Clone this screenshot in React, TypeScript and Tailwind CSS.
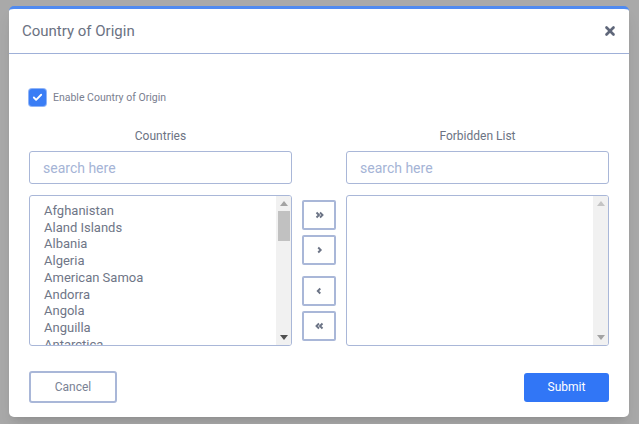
import { Check, X } from "lucide-react"

const countries = [
  "Afghanistan",
  "Aland Islands",
  "Albania",
  "Algeria",
  "American Samoa",
  "Andorra",
  "Angola",
  "Anguilla",
  "Antarctica",
]

// chevron paths for the move buttons: >>, >, <, <<
const moveButtons = [
  "M1.5 1.5 L4 4 L1.5 6.5 M5 1.5 L7.5 4 L5 6.5",
  "M3.2 1.5 L5.7 4 L3.2 6.5",
  "M5.3 1.5 L2.8 4 L5.3 6.5",
  "M4 1.5 L1.5 4 L4 6.5 M7.5 1.5 L5 4 L7.5 6.5",
]

function Scrollbar({ thumb }: { thumb: boolean }) {
  const arrow = thumb ? "#a3a3a3" : "#c4c4c4"
  return (
    <div className="flex w-[15px] flex-col items-center bg-[#f1f1f1]">
      <div className="flex h-[15px] items-center justify-center">
        <svg width="8" height="5" viewBox="0 0 8 5">
          <path d="M0 5 L4 0 L8 5 Z" fill={arrow} />
        </svg>
      </div>
      {thumb && <div className="h-[30px] w-[12px] bg-[#c1c1c1]" />}
      <div className="flex-1" />
      <div className="flex h-[15px] items-center justify-center">
        <svg width="8" height="5" viewBox="0 0 8 5">
          <path d="M0 0 L4 5 L8 0 Z" fill={thumb ? "#505050" : "#a3a3a3"} />
        </svg>
      </div>
    </div>
  )
}

function ListColumn({ title, items }: { title: string; items: string[] }) {
  return (
    <div className="flex w-[263px] flex-col">
      <p className="text-center text-[12px] leading-[14px] text-[#6c7383]">{title}</p>
      <input
        placeholder="search here"
        className="mt-[8px] h-[33px] w-full rounded-[3px] border border-[#a9b7d8] px-[13px] text-[14px] text-[#6c7383] outline-none placeholder:text-[#a5b4d6]"
      />
      <div className="mt-[11px] flex h-[151px] overflow-hidden rounded-[3px] border border-[#a9b7d8]">
        <div className="flex-1 overflow-hidden pt-[7px] pl-[14px]">
          {items.map((item) => (
            <div key={item} className="text-[13px] leading-[16.7px] whitespace-nowrap text-[#6f7687]">
              {item}
            </div>
          ))}
        </div>
        <Scrollbar thumb={items.length > 0} />
      </div>
    </div>
  )
}

export default function App() {
  return (
    <div
      className="h-[424px] w-[639px] overflow-hidden bg-[#a9a9a9] pt-[6px] pl-[9px]"
      style={{ fontFamily: "Roboto, 'Liberation Sans', sans-serif" }}
    >
      <div className="w-[620px] rounded-[5px] border-t-[3px] border-[#4f8af0] bg-white shadow-lg">
        {/* Header */}
        <div className="flex h-[45px] items-center justify-between border-b border-[#9fb0d8] pr-[12px] pl-[13px]">
          <h2 className="text-[15px] text-[#6b7282]">Country of Origin</h2>
          <X className="h-[14px] w-[14px] text-[#5f677a]" strokeWidth={4.5} />
        </div>

        {/* Body */}
        <div className="px-5 pt-[35px] pb-[14px]">
          <label className="flex items-center gap-[7px]">
            <span className="flex h-[17px] w-[17px] items-center justify-center rounded-[3px] bg-[#3a7df5] ring-1 ring-[#8fb4f8]">
              <Check className="h-[11px] w-[11px] text-white" strokeWidth={4} />
            </span>
            <span className="text-[10.5px] text-[#7a8090]">Enable Country of Origin</span>
          </label>

          <div className="mt-[23px] flex gap-[10px]">
            <ListColumn title="Countries" items={countries} />

            <div className="flex w-[34px] flex-col pt-[63px]">
              {moveButtons.map((d, i) => (
                <button
                  key={d}
                  className={`flex h-[30px] w-[34px] items-center justify-center rounded-[2px] border-2 border-[#a9b7d8] bg-white ${
                    i === 0 ? "mt-[8px]" : i === 2 ? "mt-[11px]" : "mt-[5px]"
                  }`}
                >
                  <svg width="9" height="8" viewBox="0 0 9 8">
                    <path d={d} fill="none" stroke="#6b7385" strokeWidth="1.9" />
                  </svg>
                </button>
              ))}
            </div>

            <ListColumn title="Forbidden List" items={[]} />
          </div>

          {/* Footer */}
          <div className="mt-[25px] flex items-center justify-between">
            <button className="h-[32px] w-[88px] rounded-[3px] border-2 border-[#a9b7d8] text-[12px] text-[#7a8294]">
              Cancel
            </button>
            <button className="h-[29px] w-[85px] rounded-[3px] bg-[#3176f6] text-[12px] text-white">
              Submit
            </button>
          </div>
        </div>
      </div>
    </div>
  )
}
